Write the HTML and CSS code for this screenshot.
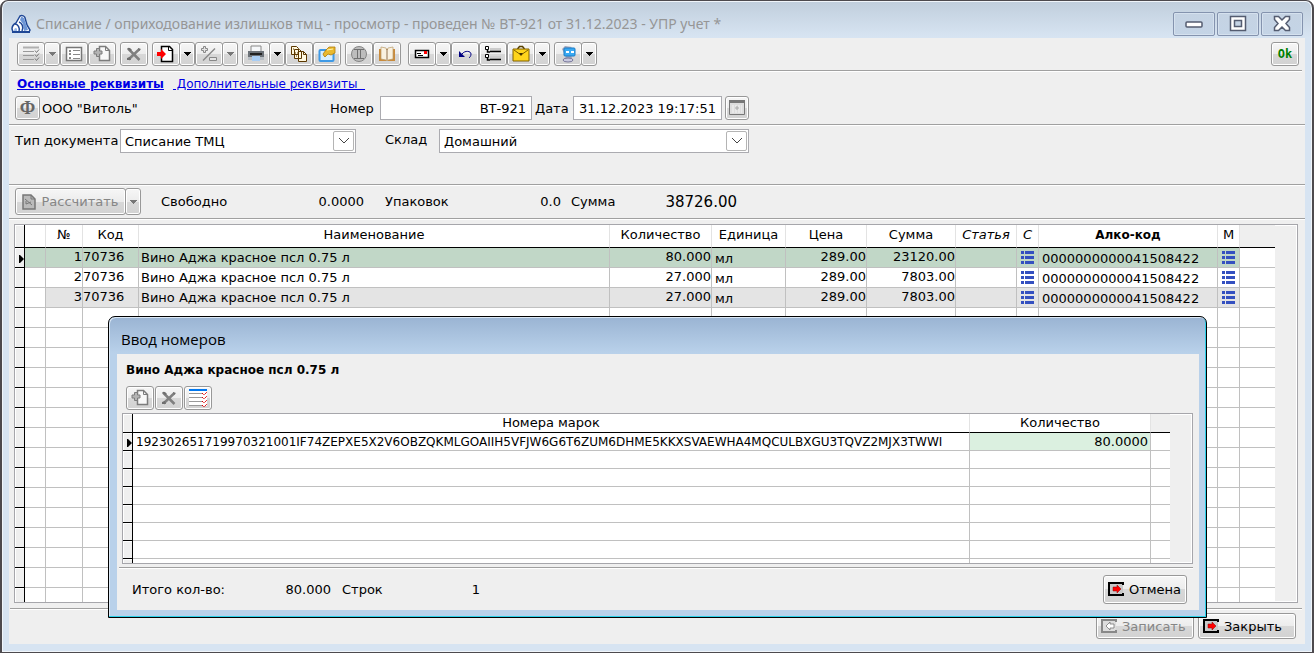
FILE: index.html
```html
<!DOCTYPE html>
<html lang="ru">
  <head>
    <meta charset="UTF-8" />
    <meta name="viewport" content="width=device-width, initial-scale=1.0" />
    <title>Списание / оприходование излишков тмц</title>
    <link rel="stylesheet" href="styles.css">
  </head>
  <body>
    <!-- icons used more than once -->
    <svg class="sprite" aria-hidden="true">
      <symbol id="i-down" viewBox="0 0 7 4"><path d="M0 0h7v1H6v1H5v1H4v1H3V3H2V2H1V1H0z" fill="currentColor"/></symbol>
      <symbol id="i-add" viewBox="0 0 18 18">
        <path d="M6.500 1.500h6l4 4v10h-10z" fill="#f8f8f8" stroke="#7c7c7c" stroke-width="1.500"/>
        <path d="M12.500 1.500v4h4" fill="none" stroke="#7c7c7c"/>
        <path d="M3.500 3.500h3v2.500h2.500v3H6.500v2.500h-3V9H1V6h2.500z" fill="#b4b4b4" stroke="#7c7c7c"/>
      </symbol>
      <symbol id="i-del" viewBox="0 0 18 18"><path d="M3 3.500l11.500 11.500M14.500 4L3.500 14.500" fill="none" stroke="#808080" stroke-width="2.500"/><path d="M2 3h3l2 2-2 1zM2 13l3-1 1 3H2zM13 3l3 1-2 2z" fill="#6e6e6e"/></symbol>
      <symbol id="i-exit" viewBox="0 0 16 14">
        <path d="M15 3V1H1v12h14v-2" fill="#c8c8c8" stroke="#000" stroke-width="2"/>
        <path d="M5 5h4V3l4 4-4 4V9H5z" fill="#f00" stroke="#800" stroke-width=".5"/>
      </symbol>
      <symbol id="i-list" viewBox="0 0 13 14"><path d="M0 0h3v3H0zM4 0h9v3H4zM0 5h3v3H0zM4 5h9v3H4zM0 10h3v3H0zM4 10h9v3H4z" fill="#3450c0"/></symbol>
    </svg>

    <div class="window">
      <header class="titlebar">
        <svg class="logo" viewBox="0 0 20 20"><path d="M5 9l4-7c2-1 5 0 5 2l2 7 3 5-1 2H2l-1-3c0-3 2-5 4-6z" fill="#fff" stroke="#1f4796" stroke-width="1.500"/><path d="M10 3c3 0 3 1 4 4l3 9-4 1-1-7-3-4z" fill="#6d96d6"/><path d="M4 10c3 0 5 4 4 7M8 8c3 1 5 5 3 9" fill="none" stroke="#1f4796" stroke-width="1.500"/><path d="M3 17c0-3 2-4 3-2v2z" fill="#9ab9e8"/><path d="M1 18h18" stroke="#1f4796" stroke-width="2"/></svg>
        <h1>Списание / оприходование излишков тмц - просмотр - проведен № ВТ-921 от 31.12.2023 - УПР учет *</h1>
        <div class="win-buttons">
          <button aria-label="Свернуть"><svg width="18" height="18"><rect x="1" y="7" width="16" height="5" rx="1" fill="#fff" stroke="#545c70" stroke-width="1.500"/></svg></button>
          <button aria-label="Развернуть"><svg width="18" height="18"><path d="M1.500 1.500h15v14h-15zM5.500 5.500v6h7v-6z" fill="#fff" fill-rule="evenodd" stroke="#545c70" stroke-width="1.500"/></svg></button>
          <button aria-label="Закрыть окно"><svg width="18" height="18"><path d="M1.500 1.500h4L9 5l3.500-3.500h4v3L13 8.500l3.500 4v3h-4L9 12l-3.500 3.500h-4v-3L5 8.500l-3.500-4z" fill="#fff" stroke="#545c70" stroke-width="1.500"/></svg></button>
        </div>
      </header>

      <main class="content">
        <div class="toolbar line">
          <div class="group">
            <button class="btn" aria-label="Отметить"><svg width="18" height="18" fill="none" stroke="#999"><path d="M1 2.500h16" stroke="#b0b0b0" stroke-width="2"/><path d="M1 6.500h11M1 10.500h11M1 14.500h11"/><path d="M13 5.500l1.500 2L17 4.500M13 9.500l1.500 2L17 8.500M13 13.500l1.500 2 2.500-3" stroke="#777"/></svg></button>
            <button class="btn drop off" aria-label="Ещё"><svg class="down"><use href="#i-down"/></svg></button>
            <button class="btn" aria-label="Свойства"><svg width="18" height="18"><path d="M1.500 2.500h15v13h-15z" fill="#fff" stroke="#777" stroke-width="1.500"/><path d="M4 5h2v2H4zM8 5h7v1H8zM4 8h2v2H4zM8 9h7v1H8zM4 12h2v2H4zM8 13h7v1H8z" fill="#888"/></svg></button>
            <button class="btn" aria-label="Добавить"><svg width="18" height="18"><use href="#i-add"/></svg></button>
          </div>
          <div class="group">
            <button class="btn" aria-label="Удалить"><svg width="18" height="18"><use href="#i-del"/></svg></button>
          </div>
          <div class="group">
            <button class="btn" aria-label="Импорт"><svg width="18" height="18"><path d="M4.500 1.500h8l3 3v12h-11z" fill="#fff" stroke="#000" stroke-width="1.500"/><path d="M11.500 1.500v4h4" fill="none" stroke="#000"/><path d="M0 7h4V4l5 5-5 5v-3H0z" fill="#f00"/></svg></button>
            <button class="btn drop" aria-label="Ещё"><svg class="down"><use href="#i-down"/></svg></button>
            <button class="btn" aria-label="Скидка"><svg width="18" height="18" fill="#e4e4e4" stroke="#888"><path d="M3.500 1.500h2v2h2v2h-2v2h-2v-2h-2v-2h2z"/><path d="M3 15.500L15 3.500" stroke-width="1.500"/><path d="M9.500 12.500h7v3h-7z"/></svg></button>
            <button class="btn drop off" aria-label="Ещё"><svg class="down"><use href="#i-down"/></svg></button>
          </div>
          <div class="group">
            <button class="btn" aria-label="Печать"><svg width="18" height="18"><path d="M4 1h10v6H4z" fill="#f6f8fa" stroke="#888"/><path d="M1 6h16v6H1z" fill="#6c7278"/><path d="M3 8h12v2H3z" fill="#222"/><path d="M1 12h16v3H1z" fill="#b8bec4"/><path d="M5 11h8v5H5z" fill="#a8cdf4"/></svg></button>
            <button class="btn drop" aria-label="Ещё"><svg class="down"><use href="#i-down"/></svg></button>
            <button class="btn" aria-label="Копировать"><svg width="18" height="18" fill="#fff8df" stroke="#5c3800"><path d="M1.500 1.500h5l2 2v6h-7zM4.500 4.500h5l2 2v7h-7zM8.500 6.500h5l3 3v7h-8z"/><path d="M13.500 6.500v3h3" fill="none"/><path d="M3 4h2M5 8h3M6 11h2" stroke-dasharray="1"/></svg></button>
            <button class="btn" aria-label="Изображение"><svg width="18" height="18"><rect x="1.500" y="5" width="14" height="11" rx="1" fill="#d8efff" stroke="#3f9ae6" stroke-width="2"/><path d="M5 9l3-4 3-3h6v6l-4 2-3-1-3 3-1-1z" fill="#e9b92f" stroke="#b07b0a" stroke-width=".8"/><path d="M9 5l6-1" stroke="#fff3b0"/></svg></button>
          </div>
          <div class="group">
            <button class="btn" aria-label="Монета"><svg width="18" height="18"><circle cx="9" cy="9" r="7.500" fill="#bdbdbd" stroke="#858585"/><path d="M4 4.500h10M4 13.500h10M7.500 5v8M10.500 5v8" fill="none" stroke="#707070"/></svg></button>
            <button class="btn" aria-label="Справочник"><svg width="18" height="18"><path d="M1 4h16v12H1z" fill="#c98b3c"/><path d="M3 2l5 1 1 2 1-2 5-1v12l-5 1-1 1-1-1-5-1z" fill="#f9f1e0" stroke="#b99b68" stroke-width=".7"/><path d="M9 4v11" stroke="#8f6f4b"/></svg></button>
          </div>
          <div class="group apart">
            <button class="btn" aria-label="Письмо"><svg width="18" height="18"><path d="M2.500 5.500h13v7h-13z" fill="#fff" stroke="#000" stroke-width="1.500"/><path d="M11 6h3v3h-3z" fill="#f00"/><path d="M4 8.500h4M5 10.500h5" stroke="#000"/></svg></button>
            <button class="btn drop" aria-label="Ещё"><svg class="down"><use href="#i-down"/></svg></button>
            <button class="btn" aria-label="Отменить"><svg width="18" height="18" fill="none" stroke="#000080"><path d="M6 9c3-4 9-3 9 0 0 2-1 3-2 4"/><path d="M3 6v6h6z" fill="#000080" stroke="none"/></svg></button>
            <button class="btn" aria-label="Структура"><svg width="18" height="18"><path d="M6 3h11v3H6zM6 11h11v3H6z" fill="#ccc"/><path d="M1.500 1.500h3v3h-3zM1.500 9.500h3v3h-3z" fill="#fff" stroke="#000"/><path d="M6 6.500h11M6 14.500h11M3.500 5v2H6M3.500 13v2H6" fill="none" stroke="#000" stroke-width="1.500"/></svg></button>
            <button class="btn" aria-label="Портфель"><svg width="18" height="18"><path d="M5.500 4l2-2.500h3l2 2.500" fill="none" stroke="#574100" stroke-width="1.500"/><path d="M1 4h16v12H1z" fill="#ffd51c" stroke="#806000"/><path d="M2 5l7 5 7-5" fill="none" stroke="#806000"/><path d="M7 8h4l-2 3z" fill="#403000"/></svg></button>
            <button class="btn drop" aria-label="Ещё"><svg class="down"><use href="#i-down"/></svg></button>
          </div>
          <div class="group">
            <button class="btn" aria-label="Обмен"><svg width="18" height="18"><path d="M3 4l3-3 7 1-3 3 3 8-5 4-4-2 3-3z" fill="#9da3ba"/><rect x="5" y="3" width="11" height="8" rx="1" fill="#39a9f2" stroke="#187cc8"/><path d="M7 7h3M12 7h3" stroke="#fff" stroke-width="2"/><ellipse cx="9" cy="15" rx="5" ry="2" fill="#c9c9df" stroke="#777799"/></svg></button>
            <button class="btn drop" aria-label="Ещё"><svg class="down"><use href="#i-down"/></svg></button>
          </div>
          <button class="btn ok">Ok</button>
        </div>

        <nav class="tabs">
          <a class="active" href="#main">Основные реквизиты</a>
          <a href="#extra">&nbsp;Дополнительные реквизиты&nbsp;&nbsp;</a>
        </nav>

        <form class="head line">
          <button type="button" class="btn phi">Ф</button>
          <span class="firm">ООО "Витоль"</span>
          <label for="num">Номер</label>
          <input class="f-num" id="num" type="text" value="ВТ-921">
          <label for="date">Дата</label>
          <input class="f-date" id="date" type="text" value="31.12.2023 19:17:51">
          <button type="button" class="btn cal" aria-label="Календарь"><svg width="18" height="18"><path d="M1.500 2.500h15v13h-15z" fill="#ddd" stroke="#777"/><path d="M1 1h16v3H1z" fill="#777"/><path d="M4 7h10M4 9h10M4 11h10M4 13h10" stroke="#f4f4f4" stroke-dasharray="2 1"/><path d="M8 8h2v2H8z" fill="none" stroke="#aaa"/></svg></button>
        </form>

        <form class="types line">
          <label for="type">Тип документа</label>
          <div class="select s-type">
            <select id="type"><option>Списание ТМЦ</option></select>
            <span class="arrow"><svg width="10" height="6"><path d="M0 0l5 5 5-5" fill="none" stroke="#444"/></svg></span>
          </div>
          <label class="l-store" for="store">Склад</label>
          <div class="select s-store">
            <select id="store"><option>Домашний</option></select>
            <span class="arrow"><svg width="10" height="6"><path d="M0 0l5 5 5-5" fill="none" stroke="#444"/></svg></span>
          </div>
        </form>

        <div class="totals line">
          <button class="btn calc" disabled><svg width="14" height="16"><path d="M1 1h8l4 4v10H1z" fill="#bbb" stroke="#777" stroke-width="1.500"/><path d="M9 1v4h4M3 5l7 6M4 10l5-2M4 7v3" fill="none" stroke="#777"/></svg>Рассчитать</button>
          <button class="btn drop off" aria-label="Ещё"><svg class="down"><use href="#i-down"/></svg></button>
          <span class="t-free">Свободно</span><span class="t-free-v">0.0000</span>
          <span class="t-pack">Упаковок</span><span class="t-pack-v">0.0</span>
          <span class="t-sum">Сумма</span><span class="t-sum-v">38726.00</span>
        </div>

        <div class="grid">
          <div class="grid-body">
            <table class="goods">
              <colgroup>
                <col class="c-ind"><col class="c-mark"><col class="c-no"><col class="c-code"><col><col class="c-qty"><col class="c-unit">
                <col class="c-price"><col class="c-sum"><col class="c-item"><col class="c-ico"><col class="c-alco"><col class="c-ico"><col class="c-rest">
              </colgroup>
              <thead>
                <tr><th></th><th></th><th>№</th><th>Код</th><th>Наименование</th><th>Количество</th><th>Единица</th><th>Цена</th><th>Сумма</th><th class="it">Статья</th><th class="it">С</th><th class="b">Алко-код</th><th>М</th><th></th></tr>
              </thead>
              <tbody id="goods"></tbody>
            </table>
          </div>
        </div>

        <footer class="actions">
          <button class="btn big" disabled><svg width="16" height="14"><path d="M15 3V1H1v12h14v-2" fill="#ddd" stroke="#888" stroke-width="2"/><path d="M13 5H9V3L5 7l4 4V9h4z" fill="#fff" stroke="#777" stroke-width=".8"/></svg>Записать</button>
          <button class="btn big"><svg width="16" height="14"><use href="#i-exit"/></svg>Закрыть</button>
        </footer>
      </main>

      <section class="dialog" role="dialog" aria-labelledby="dlg-title">
        <h2 id="dlg-title">Ввод номеров</h2>
        <div class="dlg-content">
          <p class="dlg-name">Вино Аджа красное псл 0.75 л</p>
          <div class="dlg-tools">
            <button class="btn" aria-label="Добавить"><svg width="18" height="18"><use href="#i-add"/></svg></button>
            <button class="btn" aria-label="Удалить"><svg width="18" height="18"><use href="#i-del"/></svg></button>
            <button class="btn" aria-label="Отметить"><svg width="18" height="18" fill="none"><path d="M0 1h18v16H0z" fill="#fff"/><path d="M0 1h18" stroke="#0078f0" stroke-width="2"/><path d="M0 4.500h13M0 8.500h13M0 12.500h13M0 16.500h13" stroke="#999"/><path d="M13 4l2 2 3-3M13 8l2 2 3-3M13 12l2 2 3-3M13 16l2 2 3-3" stroke="#e00000" stroke-dasharray="1.500 .5"/></svg></button>
          </div>
          <div class="grid">
            <div class="grid-body">
              <table class="marks">
                <colgroup><col class="c-ind"><col><col class="c-marks-qty"><col class="c-marks-rest"></colgroup>
                <thead><tr><th></th><th>Номера марок</th><th>Количество</th><th></th></tr></thead>
                <tbody id="marks"></tbody>
              </table>
            </div>
          </div>
          <div class="dlg-foot">
            <span>Итого кол-во:</span><span class="d-total">80.000</span>
            <span class="d-rows">Строк</span><span class="d-rows-v">1</span>
            <button class="btn big"><svg width="16" height="14"><use href="#i-exit"/></svg>Отмена</button>
          </div>
        </div>
      </section>
    </div>

    <script>
      var list = '<svg width="13" height="14"><use href="#i-list"/></svg>';
      var current = '<svg class="current" width="5" height="8"><path d="M0 0h1l4 4-4 4H0z"/></svg>';
      var goods = [
        ["1", "80.000", "23120.00", "sel"],
        ["2", "27.000", "7803.00", ""],
        ["3", "27.000", "7803.00", "alt"]
      ];
      var html = "";
      for (var i = 0; i < goods.length; i++) {
        var g = goods[i];
        html += "<tr class='" + g[3] + "'><td>" + (g[3] == "sel" ? current : "") + "</td><td></td><td class='num'>" + g[0] +
          "</td><td class='code'>70736</td><td class='txt'>Вино Аджа красное псл 0.75 л</td><td class='num'>" + g[1] +
          "</td><td class='low'>мл</td><td class='num'>289.00</td><td class='num'>" + g[2] +
          "</td><td></td><td class='ico'>" + list + "</td><td class='low'>0000000000041508422</td><td class='ico'>" + list + "</td><td></td></tr>";
      }
      // пустые строки до низа таблицы
      for (var i = 0; i < 40; i++) {
        html += "<tr>" + "<td></td>".repeat(14) + "</tr>";
      }
      document.getElementById("goods").innerHTML = html;

      html = "<tr><td>" + current + "</td><td class='mark'>192302651719970321001IF74ZEPXE5X2V6OBZQKMLGOAIIH5VFJW6G6T6ZUM6DHME5KKXSVAEWHA4MQCULBXGU3TQVZ2MJX3TWWI</td><td class='mqty'>80.0000</td><td></td></tr>";
      for (var i = 0; i < 8; i++) {
        html += "<tr>" + "<td></td>".repeat(4) + "</tr>";
      }
      document.getElementById("marks").innerHTML = html;
    </script>
  </body>
</html>
```
FILE: styles.css
```css
* {
  box-sizing: border-box;
}
body {
  margin: 0;
  background: #fff;
  font-family: Verdana, "DejaVu Sans", sans-serif;
  font-size: 13px;
  color: #000;
}
button,
input,
select {
  font: inherit;
  color: inherit;
}
.sprite {
  position: absolute;
  width: 0;
  height: 0;
}

/* window */
.window {
  position: relative;
  display: flex;
  flex-direction: column;
  height: 100vh;
  min-height: 640px;
  padding: 0 7px 8px;
  border: 2px solid #4d4a4e;
  border-top-width: 1px;
  border-bottom-width: 1px;
  border-radius: 8px 8px 0 0;
  background: linear-gradient(#c0cedc, #d7e4f2 36px);
  box-shadow: inset 0 0 0 1px #f0f5fa;
}
.titlebar {
  display: flex;
  align-items: center;
  height: 37px;
  padding: 8px 0 0 2px;
}
.logo {
  width: 20px;
  height: 20px;
}
.titlebar h1 {
  flex: 1;
  margin: 0 0 0 5px;
  font: 14px "Noto Sans", sans-serif;
  color: #969696;
  white-space: nowrap;
  overflow: hidden;
}
.win-buttons {
  display: flex;
  gap: 2px;
  padding-right: 2px;
}
.win-buttons button {
  display: flex;
  align-items: center;
  justify-content: center;
  width: 42px;
  height: 24px;
  padding: 0;
  border: 1px solid #8493ae;
  border-radius: 2px;
  background: linear-gradient(#c5d3e3, #c4d4e6);
  box-shadow: inset 0 0 0 1px #d5e1ee;
}
.content {
  flex: 1;
  display: flex;
  flex-direction: column;
  min-height: 0;
  background: #efefef;
}
.line {
  border-bottom: 1px solid #a0a0a0;
  box-shadow: 0 1px #fff;
}

/* buttons */
.btn {
  display: inline-flex;
  align-items: center;
  justify-content: center;
  flex: none;
  width: 28px;
  height: 24px;
  padding: 0;
  border: 1px solid #989898;
  border-radius: 3px;
  background: linear-gradient(#f6f6f6, #ececec 50%, #d8d8d8 50%, #d2d2d2);
  box-shadow: inset 0 0 0 1px #fff;
}
.drop {
  width: 16px;
  margin-left: -1px;
}
.down {
  width: 7px;
  height: 4px;
}
.off {
  color: #777;
}
.btn:disabled {
  color: #868686;
}
.btn.big {
  justify-content: flex-start;
  width: 98px;
  height: 26px;
  padding-left: 4px;
  gap: 5px;
}

.toolbar {
  display: flex;
  gap: 4px;
  height: 33px;
  margin: 0 3px 0 2px;
  padding: 4px 3px 0 6px;
}
.group {
  display: flex;
}
.apart {
  margin-left: 3px;
}
.btn.ok {
  margin-left: auto;
  font: bold 12px "DejaVu Sans Mono", monospace;
  color: #008000;
}

.tabs {
  display: flex;
  gap: 9px;
  height: 25px;
  padding: 5px 8px 0;
  font-size: 12px;
  line-height: 16px;
}
.tabs a {
  color: #0000e6;
}
.tabs .active {
  font-weight: bold;
}

/* document fields */
.head {
  display: flex;
  align-items: center;
  height: 29px;
  padding: 0 6px 4px;
}
.btn.phi {
  width: 25px;
  font: bold 18px "Liberation Serif", serif;
  color: #666;
}
.firm {
  width: 290px;
  padding-left: 2px;
}
.head label {
  width: 50px;
}
.head input {
  height: 24px;
  padding: 0 5px;
  border: 1px solid #ababb0;
  background: #fff;
}
.f-num {
  width: 152px;
  text-align: right;
}
.head .f-num + label {
  width: 41px;
  padding-left: 3px;
}
.f-date {
  width: 149px;
}
.btn.cal {
  width: 24px;
  margin-left: 3px;
}
.types {
  display: flex;
  align-items: flex-start;
  height: 60px;
  padding: 4px 6px 0;
  line-height: 24px;
}
.types label {
  width: 105px;
}
.types .l-store {
  width: 54px;
  margin-left: 29px;
  line-height: 22px;
}
.select {
  position: relative;
  height: 24px;
}
.s-type {
  width: 236px;
}
.s-store {
  width: 310px;
}
.select select {
  display: block;
  width: 100%;
  height: 24px;
  padding: 0 4px;
  border: 1px solid #ababb0;
  border-radius: 0;
  background: #fff;
  appearance: none;
}
.arrow {
  position: absolute;
  top: 2px;
  right: 2px;
  display: flex;
  align-items: center;
  justify-content: center;
  width: 21px;
  height: 20px;
  border: 1px solid #b4b4b4;
  border-radius: 2px;
  background: #fff;
  pointer-events: none;
}

/* totals */
.totals {
  display: flex;
  align-items: center;
  height: 34px;
  padding: 0 6px;
}
.btn.calc {
  width: 111px;
  height: 27px;
  gap: 5px;
}
.totals .drop {
  height: 27px;
}
.t-free {
  width: 123px;
  margin-left: 20px;
}
.t-free-v {
  width: 80px;
  text-align: right;
}
.t-pack {
  width: 120px;
  margin-left: 21px;
}
.t-pack-v {
  width: 56px;
  text-align: right;
}
.t-sum {
  width: 70px;
  margin-left: 10px;
}
.t-sum-v {
  width: 96px;
  font-size: 15px;
  text-align: right;
}

/* tables */
.grid {
  flex: 1;
  min-height: 0;
  margin: 5px 7px 0 5px;
  padding-right: 22px;
  border: 1px solid #a6a6ab;
  background: #efefef;
  box-shadow: inset -1px -1px #fff, inset 0 1px #fff;
  overflow: hidden;
}
.grid-body {
  height: 100%;
  overflow: hidden;
  background: #fff;
}
table {
  width: 100%;
  table-layout: fixed;
  border-collapse: separate;
  border-spacing: 0;
}
th {
  height: 23px;
  padding: 0 0 2px;
  border-right: 1px solid #e3e3e3;
  border-bottom: 1px solid #000;
  background: #fff;
  font-weight: normal;
  line-height: 16px;
  overflow: hidden;
  white-space: nowrap;
}
th:last-child {
  border-right: 0;
  background: #efefef;
}
td {
  height: 20px;
  padding: 0;
  border-right: 1px solid #c0c0c0;
  border-bottom: 1px solid #c0c0c0;
  line-height: 16px;
  vertical-align: top;
  overflow: hidden;
  white-space: nowrap;
}
td:last-child {
  border-right: 0;
}
th:first-child,
td:first-child {
  border-right: 1px solid #000;
  border-bottom-color: #000;
  background: #efefef;
  box-shadow: inset 1px 1px #fff;
}
.current {
  display: block;
  margin: 7px 0 0 4px;
}
.it {
  font-style: italic;
}
.b {
  font-size: 12px;
  font-weight: bold;
}
.c-ind { width: 10px; }
.c-mark { width: 21px; }
.c-no { width: 37px; }
.c-code { width: 56px; }
.c-qty { width: 102px; }
.c-unit { width: 74px; }
.c-price { width: 81px; }
.c-sum { width: 89px; }
.c-item { width: 61px; }
.c-ico { width: 22px; }
.c-alco { width: 179px; }
.c-rest { width: 35px; }
.c-marks-qty { width: 181px; }
.c-marks-rest { width: 19px; }
.goods .sel td:not(:first-child):not(:last-child) {
  background: #c1d7c7;
}
.goods .alt td:nth-child(n + 3):not(:last-child) {
  background: #e4e4e4;
}
.num,
.code {
  padding-top: 1px;
}
.num {
  text-align: right;
}
.txt {
  padding: 2px 0 0 2px;
}
.low {
  padding: 3px 0 0 3px;
}
.ico {
  padding-top: 3px;
  text-align: center;
  line-height: 0;
}

.actions {
  display: flex;
  justify-content: flex-end;
  gap: 4px;
  margin: 5px 3px 0 1px;
  padding: 4px 6px 5px;
  border-top: 1px solid #a0a0a0;
  box-shadow: inset 0 1px #fff;
}

/* dialog over the document */
.dialog {
  position: absolute;
  top: 315px;
  left: 106px;
  right: 105px;
  padding: 0 7px 7px 8px;
  border: 1px solid #000;
  border-radius: 7px 7px 0 0;
  background: linear-gradient(#9ab4d3, #b9d1ea 36px);
  box-shadow: inset -1px -1px #2bd0e8, inset 1px 1px #dbe8f5;
}
.dialog h2 {
  margin: 0;
  padding: 4px 4px 0;
  height: 37px;
  font: 15px/36px "Open Sans", sans-serif;
}
.dlg-content {
  background: #efefef;
}
.dlg-name {
  margin: 0;
  padding: 8px 9px 0;
  font-size: 12px;
  font-weight: bold;
  line-height: 16px;
}
.dlg-tools {
  display: flex;
  gap: 1px;
  padding: 8px 9px 3px;
}
.dialog .grid {
  height: 151px;
  margin: 0 6px 0 5px;
}
.marks th {
  height: 19px;
  padding: 0;
}
.marks td {
  height: 18px;
}
.marks .current {
  margin-top: 6px;
}
.mark {
  padding: 1px 0 0 3px;
  font-size: 12px;
}
.mqty {
  padding: 1px 2px 0 0;
  background: #dbf0e0;
  text-align: right;
}
.dlg-foot {
  display: flex;
  align-items: center;
  height: 43px;
  margin: 3px 6px 0 2px;
  padding: 0 6px 0 13px;
  border-top: 1px solid #a0a0a0;
  box-shadow: inset 0 1px #fff;
}
.dlg-foot span:first-child {
  width: 110px;
}
.d-total {
  width: 89px;
  text-align: right;
}
.d-rows {
  width: 60px;
  margin-left: 11px;
}
.d-rows-v {
  width: 78px;
  text-align: right;
}
.dlg-foot .btn.big {
  width: 84px;
  height: 29px;
  margin-left: auto;
}
```
